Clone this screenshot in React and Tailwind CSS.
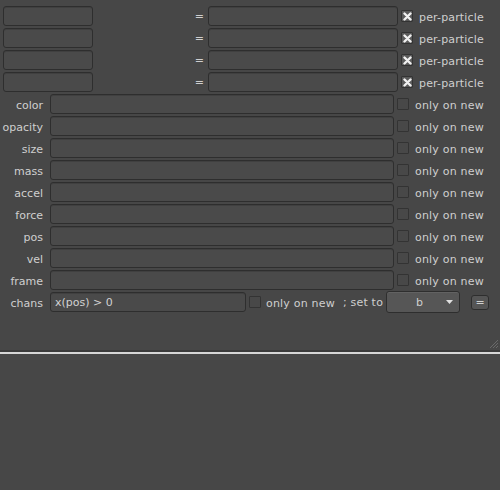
import React from 'react';

const font = { fontFamily: '"DejaVu Sans", "Liberation Sans", sans-serif' };

const Field = ({ className = '', children }) => (
  <div className={`h-[20px] rounded-[3px] border border-[#2e2e2e] bg-[#4a4a4a] shadow-[inset_0_1px_0_#404040] flex items-center px-[4px] pt-[2px] text-[11px] text-[#d2d2d2] ${className}`}>
    {children}
  </div>
);

const Box = ({ checked }) => (
  <div className={`w-[12px] h-[12px] rounded-[1px] border flex items-center justify-center ${checked ? 'border-[#333] bg-[#5a5a5a]' : 'border-[#333] bg-[#484848]'}`}>
    {checked && (
      <svg width="9" height="9" viewBox="0 0 9 9">
        <path d="M1.5 1.5 L7.5 7.5 M7.5 1.5 L1.5 7.5" stroke="#f0f0f0" strokeWidth="2.4" strokeLinecap="round" />
      </svg>
    )}
  </div>
);

const labels = ['color', 'opacity', 'size', 'mass', 'accel', 'force', 'pos', 'vel', 'frame'];

export default function App() {
  return (
    <div className="w-[500px] h-[490px] bg-[#474747] text-[#cfcfcf] text-[11px] overflow-hidden" style={font}>
      <div className="flex flex-col h-[350px] pt-[5px] pb-[2px]">
        {[0, 1, 2, 3].map(i => (
          <div key={i} className="flex items-center h-[22px]">
            <Field className="ml-[3px] w-[90px]" />
            <span className="w-[115px] text-right pr-[4px] pt-[2px]">=</span>
            <Field className="w-[190px]" />
            <div className="ml-[3px]"><Box checked /></div>
            <span className="ml-[6px] tracking-[0.15px] pt-[4px]">per-particle</span>
          </div>
        ))}
        {labels.map(l => (
          <div key={l} className="flex items-center h-[22px]">
            <span className="w-[44px] text-right pr-[1px] pt-[4px]">{l}</span>
            <Field className="ml-[6px] w-[344px]" />
            <div className="ml-[3px]"><Box /></div>
            <span className="ml-[6px] tracking-[0.2px] pt-[4px]">only on new</span>
          </div>
        ))}
        <div className="flex items-center h-[22px]">
          <span className="w-[44px] text-right pr-[1px] pt-[4px]">chans</span>
          <Field className="ml-[6px] w-[196px]">x(pos) &gt; 0</Field>
          <div className="ml-[3px]"><Box /></div>
          <span className="ml-[5px] tracking-[0.2px] pt-[4px]">only on new</span>
          <span className="ml-[8px] tracking-[0.2px] pt-[2px]">; set to</span>
          <div className="ml-[3px] w-[74px] h-[22px] rounded-[3px] border border-[#2e2e2e] bg-[#565656] shadow-[inset_0_1px_0_#626262] flex items-center pl-[6px] pr-[6px]">
            <span className="flex-1 text-center pt-[2px]">b</span>
            <svg width="7" height="4" viewBox="0 0 7 4">
              <path d="M0 0 H7 L3.5 4 Z" fill="#e0e0e0" />
            </svg>
          </div>
          <div className="ml-[11px] w-[18px] h-[15px] rounded-[3px] border border-[#2e2e2e] bg-[#555] flex items-center justify-center leading-none">=</div>
        </div>
        <div className="flex-1 flex items-end justify-end pr-[2px]">
          <svg width="9" height="9" viewBox="0 0 9 9">
            <path d="M9 1 L1 9 M9 4 L4 9 M9 7 L7 9" stroke="#6a6a6a" strokeWidth="1" />
          </svg>
        </div>
      </div>
      <div className="h-[2px] bg-[#3a3a3a]" />
      <div className="h-[2px] bg-[#d6d6d6]" />
    </div>
  );
}
